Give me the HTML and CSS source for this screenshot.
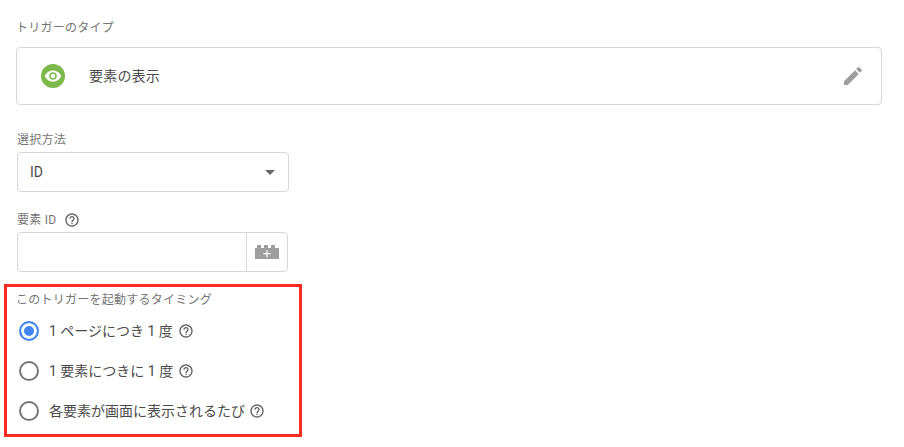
FILE: index.html
```html
<!DOCTYPE html>
<html lang="ja">
<head>
  <meta charset="UTF-8" />
  <title>トリガーのタイプ</title>
  <link rel="stylesheet" href="styles.css">
</head>
<body>
  <div class="label type-label">トリガーのタイプ</div>
  <div class="type-card">
    <span class="type-icon">
      <svg width="18" height="18" viewBox="0 0 24 24"><path fill="#fff" d="M12 4.500C7 4.500 2.700 7.600 1 12c1.700 4.400 6 7.500 11 7.500s9.300-3.100 11-7.500c-1.700-4.400-6-7.500-11-7.500zM12 17a5 5 0 1 1 0-10 5 5 0 0 1 0 10zm0-8a3 3 0 1 0 0 6 3 3 0 0 0 0-6z"/></svg>
    </span>
    <span class="type-name">要素の表示</span>
    <svg class="edit-icon" width="24" height="24" viewBox="0 0 24 24"><path fill="#9e9e9e" d="M3 17.250V21h3.750L17.810 9.940l-3.750-3.750L3 17.250zM20.710 7.040a1 1 0 0 0 0-1.410l-2.340-2.340a1 1 0 0 0-1.410 0l-1.830 1.830 3.750 3.750 1.830-1.830z"/></svg>
  </div>

  <div class="label method-label">選択方法</div>
  <div class="select">
    <span>ID</span>
    <span class="arrow"></span>
  </div>

  <div class="label id-label">
    要素 ID
    <svg class="help" width="16" height="16" viewBox="0 0 24 24"><use href="#help"/></svg>
  </div>
  <div class="id-input">
    <div class="id-field"></div>
    <div class="id-button">
      <svg width="24" height="14" viewBox="0 0 24 14"><path fill="#9e9e9e" d="M0 3h2V0h4v3h3V0h4v3h3V0h4v3h4v11H0z"/><path fill="#fff" d="M11.400 5h1.200v3h3v1.200h-3v3h-1.200v-3h-3V8h3z"/></svg>
    </div>
  </div>

  <div class="timing">
    <div class="label">このトリガーを起動するタイミング</div>
    <div class="option">
      <span class="radio checked"></span>
      <span class="option-text">1 ページにつき 1 度</span>
      <svg class="help" width="16" height="16" viewBox="0 0 24 24"><use href="#help"/></svg>
    </div>
    <div class="option">
      <span class="radio"></span>
      <span class="option-text">1 要素につきに 1 度</span>
      <svg class="help" width="16" height="16" viewBox="0 0 24 24"><use href="#help"/></svg>
    </div>
    <div class="option">
      <span class="radio"></span>
      <span class="option-text">各要素が画面に表示されるたび</span>
      <svg class="help help-last" width="16" height="16" viewBox="0 0 24 24"><use href="#help"/></svg>
    </div>
  </div>

  <svg width="0" height="0" class="defs">
    <symbol id="help" viewBox="0 0 24 24">
      <path fill="#616161" d="M11 18h2v-2h-2v2zm1-16C6.480 2 2 6.480 2 12s4.480 10 10 10 10-4.480 10-10S17.520 2 12 2zm0 18c-4.410 0-8-3.590-8-8s3.590-8 8-8 8 3.590 8 8-3.590 8-8 8zm0-14c-2.210 0-4 1.790-4 4h2c0-1.100.9-2 2-2s2 .9 2 2c0 2-3 1.750-3 5h2c0-2.250 3-2.500 3-5 0-2.210-1.790-4-4-4z"/>
    </symbol>
  </svg>
</body>
</html>
```

FILE: styles.css
```css
body {
  font-family: Roboto, "Noto Sans CJK JP", sans-serif;
  color: #4a4a4a;
  background: white;
  margin: 0;
  padding: 19px 22px 0 16px;
  font-size: 13px;
  overflow: hidden;
}
.label {
  color: #757575;
  font-size: 12px;
  line-height: 18px;
  letter-spacing: .25px;
}
.type-card {
  display: flex;
  align-items: center;
  height: 58px;
  box-sizing: border-box;
  margin-top: 10px;
  padding: 0 16px 0 24px;
  border: 1px solid #d5d7db;
  border-radius: 4px;
}
.type-icon {
  display: flex;
  align-items: center;
  justify-content: center;
  width: 24px;
  height: 24px;
  border-radius: 50%;
  background: #7cb84a;
}
.type-name {
  margin-left: 24px;
  padding-bottom: 3px;
  flex: 1;
  font-size: 14px;
  letter-spacing: .2px;
}
.method-label {
  margin-top: 26px;
  margin-left: 1px;
}
.select {
  display: flex;
  align-items: center;
  justify-content: space-between;
  width: 272px;
  height: 40px;
  box-sizing: border-box;
  margin: 3px 0 0 1px;
  padding: 0 13px 0 12px;
  border: 1px solid #d5d7db;
  border-radius: 4px;
  font-size: 14px;
}
.arrow {
  border-left: 5px solid transparent;
  border-right: 5px solid transparent;
  border-top: 5px solid #666;
}
.id-label {
  display: flex;
  align-items: center;
  gap: 8px;
  margin: 19px 0 0 1px;
}
.id-input {
  display: flex;
  width: 271px;
  height: 40px;
  box-sizing: border-box;
  margin: 3px 0 0 1px;
  border: 1px solid #d5d7db;
  border-radius: 4px;
}
.id-field {
  flex: 1;
}
.id-button {
  display: flex;
  align-items: center;
  justify-content: center;
  width: 40px;
  border-left: 1px solid #d5d7db;
}
.timing {
  width: 298px;
  height: 153px;
  box-sizing: border-box;
  margin: 12px 0 0 -12px;
  padding: 4px 10px 0 9px;
  border: 3px solid #ff2a20;
}
.timing .label {
  margin-bottom: 2px;
}
.option {
  display: flex;
  align-items: center;
  height: 40px;
  font-size: 14px;
  padding-left: 1px;
}
.option-text {
  padding-bottom: 2px;
}
.radio {
  width: 20px;
  height: 20px;
  box-sizing: border-box;
  margin: 0 10px 0 2px;
  border: 2px solid #757575;
  border-radius: 50%;
}
.radio.checked {
  border-color: #4285f4;
  background: #4285f4;
  box-shadow: inset 0 0 0 3px white;
}
.help {
  margin-left: 5px;
}
.help-last {
  margin-left: 4px;
}
.id-label .help {
  margin-left: 0;
}
.defs {
  display: block;
}
```
